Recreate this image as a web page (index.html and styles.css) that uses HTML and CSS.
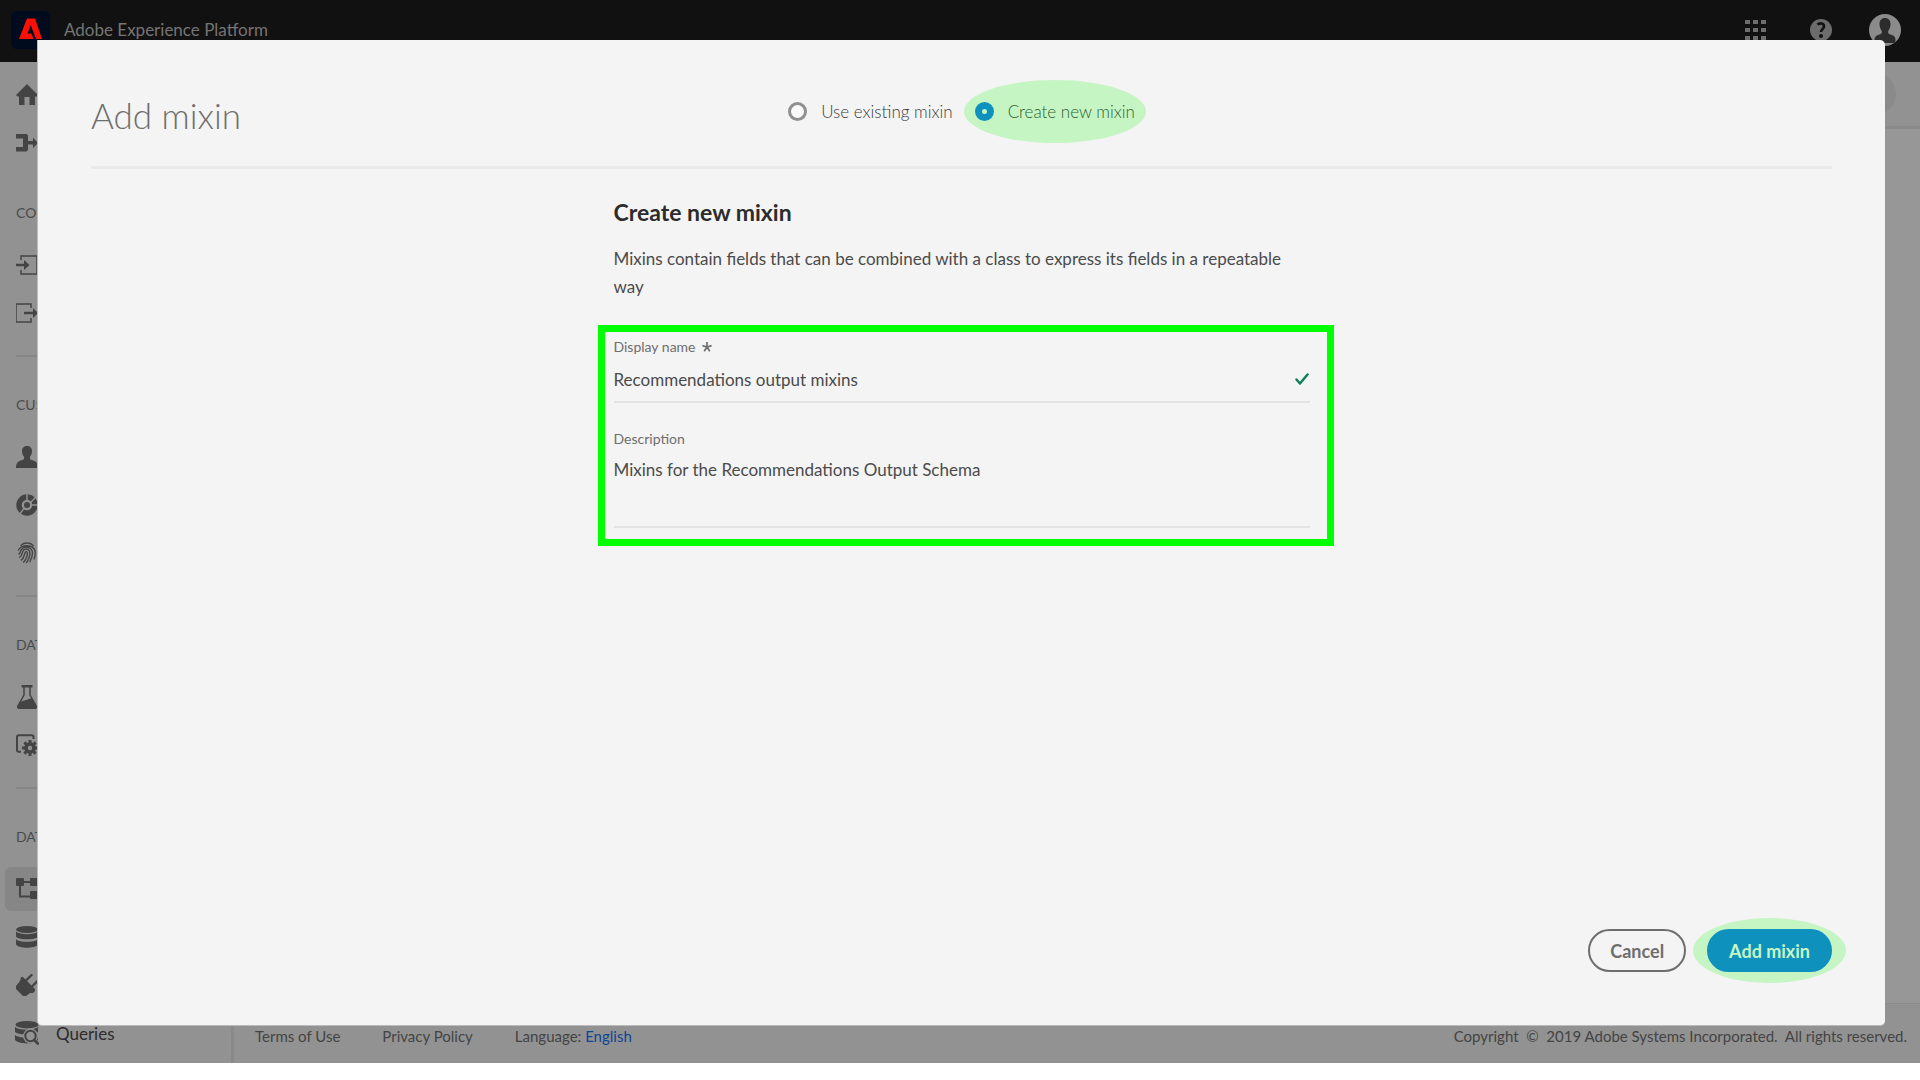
FILE: index.html
```html
<!DOCTYPE html>
<html lang="en">
<head>
<meta charset="utf-8">
<title>Adobe Experience Platform</title>
<link rel="stylesheet" href="styles.css">
</head>
<body>
<div class="app">
  <header class="topbar">
    <svg class="logo" viewBox="0 0 39 38" aria-hidden="true"><rect width="39" height="38" rx="6" fill="#000b1d"/><path d="M16 7.500h8L31 28h-6L19.700 14 16.500 22.500h4l2 5.500H8Z" fill="#fb0f02"/></svg>
    <span class="product">Adobe Experience Platform</span>
    <div class="tools">
      <svg class="icon light" viewBox="0 0 22 22" aria-label="Apps"><path d="M0 1h5v4H0zM8 1h5v4H8zM16 1h5v4h-5zM0 9h5v4H0zM8 9h5v4H8zM16 9h5v4h-5zM0 17h5v4H0zM8 17h5v4H8zM16 17h5v4h-5z"/></svg>
      <svg class="icon light" viewBox="0 0 22 22" aria-label="Help"><circle cx="11" cy="11" r="11"/><path d="M7.500 5.700C9.500 3.500 14 4 14 7.300c0 2.700-3 3-3 5.700" fill="none" stroke="#111" stroke-width="2.600"/><circle cx="11" cy="17" r="2" fill="#111"/></svg>
      <svg class="avatar" viewBox="0 0 32 32" aria-label="Account"><circle cx="16" cy="16" r="16" fill="#8b8b8b"/><path d="M16 4c3.500 0 5.500 2.500 5.500 6 0 3-1 5-2.300 7-.5 1.700.3 3.200 2 3.600 3.300.7 5.300 2 5.300 5.400 0 1.600-.7 3-1.500 3h-18c-.8 0-1.500-1.400-1.500-3 0-3.400 2-4.700 5.300-5.400 1.700-.4 2.500-1.900 2-3.600-1.300-2-2.300-4-2.300-7 0-3.500 2-6 5.500-6Z" fill="#2c2c2c"/></svg>
    </div>
  </header>

  <div class="body">
    <nav class="sidebar">
      <a class="item" href="#"><svg class="icon" viewBox="0 0 22 22"><path d="M11 0 0 11l1.500 1.500H3V21h5.500v-8h5v8H19v-8.500h2L22 11Z"/></svg></a>
      <a class="item" href="#"><svg class="icon" viewBox="0 0 22 22"><path d="M0 2h10.500l1.500 1.500V9h5V5.500L22 11l-5 5v-3.500h-5V18l-1.500 1.500H0V15h7V6.500H0Z"/></svg></a>
      <section class="group">
        <h2>CONNECTIONS</h2>
        <a class="item" href="#"><svg class="icon" viewBox="0 0 22 22"><path d="M5 6V2h16v18H5v-4" fill="none" stroke="#444" stroke-width="1.500"/><path d="M0 9.800h8V6l5.500 5L8 16v-3.800H0Z"/></svg></a>
        <a class="item" href="#"><svg class="icon" viewBox="0 0 22 22"><path d="M15 6V2H0v18h15v-4" fill="none" stroke="#444" stroke-width="1.500"/><path d="M8 9.800h9V6l5 5-5 5v-3.800H8Z"/></svg></a>
      </section>
      <section class="group">
        <h2>CUSTOMER</h2>
        <a class="item" href="#"><svg class="icon" viewBox="0 0 22 22"><path d="M11 0c3 0 5 2 5 5 0 2.500-.8 4.300-2 5.800-.6 1.800.3 3 2 3.500 3.500.7 6 2 6 7.700H0c0-5.700 2.500-7 6-7.700 1.700-.5 2.600-1.700 2-3.500C6.800 9.300 6 7.500 6 5c0-3 2-5 5-5Z"/></svg></a>
        <a class="item" href="#"><svg class="icon" viewBox="0 0 22 22"><circle cx="11" cy="11" r="8" fill="none" stroke="#444" stroke-width="5.500"/><circle cx="11" cy="11" r="3"/><path d="M11 0v6M14 9l6-6M15 11h7M8 14l-4 6" stroke="#929292" stroke-width="1.400"/></svg></a>
        <a class="item" href="#"><svg class="icon line" viewBox="0 0 22 24"><path d="M4 4.500C7 0 15 0 18 4.500M1.500 9.500C3 2.500 19 1.500 20 11c.2 3-.5 5.500-1.500 8M1.800 13.500C4.500 12 3 9.500 6 7c4-3.500 11-.5 11 5 0 4-1.500 7-3 10M2.500 17c4-2 2.500-6 5-8.500 3-2.200 6.700 0 6.700 3.500 0 4-2 8-4 11M4.500 20c4-3 3-6.500 4.800-9 1-1 2.200-.3 2.200 1 0 3.500-2 7.500-4.500 10.500"/></svg></a>
      </section>
      <section class="group">
        <h2>DATA SCIENCE</h2>
        <a class="item" href="#"><svg class="icon tall" viewBox="0 0 22 24"><path d="M5.500 0h11v2.500h-11z"/><path d="M8 2v8L1.800 21c-.5 1 0 2 1 2h16.400c1 0 1.500-1 1-2L14 10V2" fill="none" stroke="#444" stroke-width="1.500"/><path d="M5 16.500l5-1.500 6-2 5 9-1.500 2h-17L1 22Z"/></svg></a>
        <a class="item" href="#"><svg class="icon" viewBox="0 0 22 22"><path d="M17.500 5V3c0-1-.7-1.800-1.800-1.800H2.800C1.700 1.200 1 2 1 3v13c0 1 .7 1.700 1.800 1.700H5" fill="none" stroke="#444" stroke-width="2"/><circle cx="14" cy="14" r="4" fill="none" stroke="#444" stroke-width="3.600"/><path d="M14 6v3M14 19v3M6 14h3M19 14h3M8.400 8.400l2 2M17.600 17.600l2 2M8.400 19.600l2-2M17.600 10.400l2-2" stroke="#444" stroke-width="3"/></svg></a>
      </section>
      <section class="group">
        <h2>DATA MANAGEMENT</h2>
        <a class="item selected" href="#"><svg class="icon" viewBox="0 0 22 22"><rect width="8" height="8" rx="1"/><rect x="14" width="8" height="8" rx="1"/><rect x="14" y="13" width="8" height="8" rx="1"/><path d="M7 4h8M4 7v11.500h11" fill="none" stroke="#444" stroke-width="2"/></svg></a>
        <a class="item" href="#"><svg class="icon" viewBox="0 0 22 22"><ellipse cx="11" cy="3.500" rx="11" ry="3.500"/><path d="M0 5.500c4 3.500 18 3.500 22 0v5.200c-3 3.500-19 3.500-22 0ZM0 13.200c4 3.500 18 3.500 22 0v5.200c-3 4.300-19 4.300-22 0Z"/></svg></a>
        <a class="item" href="#"><svg class="icon" viewBox="0 0 22 22"><path d="M5 3 7 3l12 12v2l-2 2h-3l-4 3H7l-7-7v-3l4-5Z"/><path d="M10 6.500 15.500 1M16 12.500 21.500 7" stroke="#444" stroke-width="2.400" stroke-linecap="round"/></svg></a>
        <a class="item" href="#"><svg class="icon wide" viewBox="0 0 24 24"><ellipse cx="12" cy="3.700" rx="11.500" ry="3.700"/><path d="M0 6c4 3.500 19 3.500 23 0v5c-3 3.500-19 3.500-23 0ZM0 14c4 3.500 19 3.500 23 0v5c-3 4.500-19 4.500-23 0Z"/><circle cx="15.500" cy="15" r="7.500" fill="#929292"/><path d="m19 19 4 4" stroke="#929292" stroke-width="4"/><circle cx="15.500" cy="15" r="5.200" fill="none" stroke="#444" stroke-width="2"/><path d="m19.300 19 3.500 3.500" stroke="#444" stroke-width="2.800" stroke-linecap="round"/></svg><span>Queries</span></a>
      </section>
    </nav>
    <div class="content">
      <div class="toolbar"><span class="round"></span></div>
      <div class="canvas"></div>
      <footer class="footer">
        <a href="#">Terms of Use</a>
        <a href="#">Privacy Policy</a>
        <span>Language: <a class="language" href="#">English</a></span>
        <span class="copyright">Copyright &nbsp;©&nbsp; 2019 Adobe Systems Incorporated.&nbsp; All rights reserved.</span>
      </footer>
    </div>
  </div>

  <form class="dialog" role="dialog" aria-labelledby="dialog-title">
    <div class="dialog-head">
      <h1 id="dialog-title">Add mixin</h1>
      <div class="choices">
        <label class="choice"><input type="radio" name="mode" value="existing">Use existing mixin</label>
        <label class="choice marked"><input type="radio" name="mode" value="new" checked>Create new mixin</label>
      </div>
    </div>
    <div class="dialog-body">
      <h2>Create new mixin</h2>
      <p>Mixins contain fields that can be combined with a class to express its fields in a repeatable way</p>
      <div class="fields">
        <label for="name">Display name <svg class="star" viewBox="0 0 10 10" aria-label="required"><path d="M5 5V0M5 5 .4 3.600M5 5l4.600-1.400M5 5 2.200 9.200M5 5l2.800 4.200" stroke="#6e6e6e" stroke-width="1.700"/></svg></label>
        <div class="name-row">
          <input id="name" type="text" value="Recommendations output mixins">
          <svg class="check" viewBox="0 0 14 12" aria-hidden="true"><path d="m1.500 6.500 3.500 4L12.500 1.500" fill="none" stroke="#12805c" stroke-width="2.500" stroke-linecap="round" stroke-linejoin="round"/></svg>
        </div>
        <label for="description">Description</label>
        <textarea id="description">Mixins for the Recommendations Output Schema</textarea>
      </div>
    </div>
    <div class="actions">
      <button type="button" class="cancel">Cancel</button>
      <span class="marked"><button type="submit" class="primary">Add mixin</button></span>
    </div>
  </form>
</div>
</body>
</html>
```
FILE: styles.css
```css
* { box-sizing: border-box; }
body {
  margin: 0;
  padding-bottom: 17px;
  background: #fff;
  color: #4b4b4b;
  font-family: Lato, "Open Sans", sans-serif;
  font-size: 17px;
}
h1, h2, p { margin: 0; }
a { color: inherit; text-decoration: none; }
svg { display: block; flex: none; }
input, textarea, button { font: inherit; color: inherit; }

.app {
  position: relative;
  display: flex;
  flex-direction: column;
  min-height: calc(100vh - 17px);
}
.topbar {
  display: flex;
  align-items: center;
  height: 62px;
  padding: 0 19px 3px 11px;
  background: #111;
  color: #757575;
}
.logo { width: 39px; height: 38px; }
.product { margin-left: 14px; }
.tools { display: flex; align-items: center; gap: 43px; margin-left: auto; }
.icon { width: 22px; height: 22px; fill: #444; }
.icon.tall { height: 24px; }
.icon.wide { width: 24px; height: 24px; margin: 0 -1px; }
.icon.light { fill: #6c6c6c; }
.icon.line { fill: none; stroke: #444; stroke-width: 1.5px; }
.avatar { width: 32px; height: 32px; margin-left: -6px; }

.body { flex: 1; display: flex; background: #929292; }
.sidebar {
  flex: none;
  display: flex;
  flex-direction: column;
  width: 234px;
  padding: 11px 5px 0;
  border-right: 3px solid #898989;
}
.item {
  display: flex;
  align-items: center;
  gap: 18px;
  height: 44px;
  margin-bottom: 4px;
  padding-left: 11px;
  border-radius: 6px;
  color: #2c2c2c;
}
.item:last-child { margin-bottom: 0; }
.selected { background: #868686; }
.group { display: flex; flex-direction: column; }
.group h2 {
  height: 58px;
  padding-left: 11px;
  font-size: 14px;
  font-weight: 400;
  line-height: 56px;
  white-space: nowrap;
}
.item + .group { margin-top: 16px; }
.group + .group {
  margin: 20px 0 0 11px;
  padding-top: 20px;
  border-top: 2px solid #868686;
}
.group + .group > * { margin-left: -11px; }
.content { flex: 1; display: flex; flex-direction: column; }
.toolbar {
  display: flex;
  align-items: center;
  justify-content: flex-end;
  height: 67px;
  padding-right: 24px;
  border-bottom: 3px solid #8a8a8a;
}
.round { width: 42px; height: 42px; border-radius: 50%; background: #8a8a8a; }
.canvas { flex: 1; background: #979797; }
.footer {
  display: flex;
  align-items: center;
  gap: 42px;
  height: 60px;
  padding: 4px 13px 0 21px;
  border-top: 1px solid #8a8a8a;
  color: #444;
  font-size: 15px;
}
.language { color: #0d4694; }
.copyright { margin-left: auto; }

/* Dialog laid over the application */
.dialog {
  position: absolute;
  inset: 40px 35px 37px 37px;
  display: flex;
  flex-direction: column;
  padding: 0 53px 53px;
  border: 1px solid #bbb;
  border-width: 0 0 1px 1px;
  border-radius: 0 5px 5px 5px;
  background: #f4f4f4;
}
.dialog-head {
  display: grid;
  grid-template-columns: 1fr auto 1fr;
  align-items: center;
  height: 129px;
  padding-top: 17px;
  border-bottom: 3px solid #eaeaea;
}
.dialog-head h1 {
  padding-top: 6px;
  color: #6e6e6e;
  font-size: 35px;
  font-weight: 300;
}
.choices { display: flex; gap: 22px; font-weight: 300; }
.choice { position: relative; display: flex; align-items: center; gap: 14px; color: #3c3c3c; }
.choice input {
  appearance: none;
  width: 19px;
  height: 19px;
  margin: 0;
  border: 3px solid #909090;
  border-radius: 50%;
  background: #fafafa;
}
.marked { position: relative; z-index: 0; }
.marked::before {
  content: "";
  position: absolute;
  z-index: -1;
  inset: -21px -11px;
  border-radius: 50%;
  background: #c6f5c4;
}
.choice.marked { color: #2f602f; }
.choice input:checked { border: 7px solid #0f91bd; background: #c6f5c4; }

.dialog-body { flex: 1; width: 100%; max-width: 696px; margin: 0 auto; padding-top: 29px; }
.dialog-body h2 { color: #2c2c2c; font-size: 23px; font-weight: 700; line-height: 28px; }
.dialog-body p { margin: 19px 0 24px; line-height: 28px; }
.fields {
  display: flex;
  flex-direction: column;
  margin: 0 -24px 0 -16px;
  padding: 5px 17px 11px 9px;
  border: 7px solid #0f0;
}
.fields label {
  display: flex;
  align-items: center;
  gap: 6px;
  color: #6e6e6e;
  font-size: 14px;
  line-height: 20px;
}
.star { width: 10px; height: 10px; }
.name-row {
  display: flex;
  align-items: center;
  height: 46px;
  margin-bottom: 26px;
  border-bottom: 2px solid #e3e3e3;
}
.name-row input { flex: 1; padding: 0; border: 0; outline: 0; background: none; }
.check { width: 14px; height: 12px; margin-right: 1px; }
.fields textarea {
  height: 79px;
  padding: 7px 0;
  border: 0;
  border-bottom: 2px solid #e3e3e3;
  outline: 0;
  background: none;
  line-height: 28px;
  resize: none;
}
.actions { display: flex; justify-content: flex-end; gap: 21px; }
.actions button {
  display: block;
  height: 43px;
  padding: 0 20px;
  border: 2px solid #6e6e6e;
  border-radius: 22px;
  background: none;
  color: #6e6e6e;
  font-size: 18px;
  font-weight: 700;
}
.actions .primary { border-color: #0f91bd; background: #0f91bd; color: #c6f5c4; }
.actions .marked::before { inset: -11px -14px; }
```
